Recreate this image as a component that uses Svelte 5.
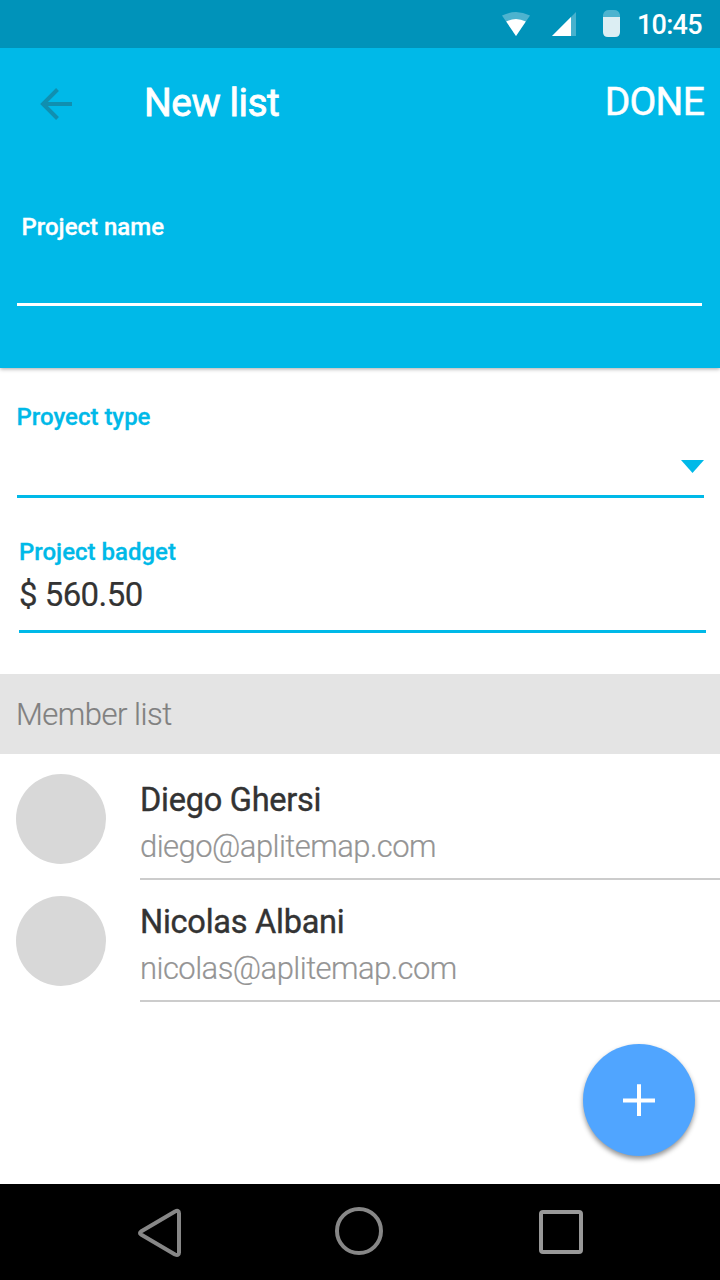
<script>
  const members = [
    { name: 'Diego Ghersi', email: 'diego@aplitemap.com' },
    { name: 'Nicolas Albani', email: 'nicolas@aplitemap.com' }
  ];
</script>

<div class="screen">
  <div class="status">
    <svg class="signals" width="120" height="48" viewBox="0 0 120 48" aria-hidden="true">
      <path d="M2 15.500Q16 8.500 30 15.500L16 36Z" fill="#fff" opacity=".3" />
      <path d="M6.200 21.500Q16 16.500 25.800 21.500L16 36Z" fill="#fff" />
      <path d="M52 36L76 12V36Z" fill="#fff" opacity=".28" />
      <path d="M52 36L71 17V36Z" fill="#fff" />
      <path d="M103 17V15Q104 10 109 10H114Q119 10 120 15V17Z" fill="#fff" opacity=".3" />
      <path d="M103 17H120V32Q120 37 115 37H108Q103 37 103 32Z" fill="#dceef3" />
    </svg>
    <span class="time">10:45</span>
  </div>

  <header>
    <div class="toolbar">
      <svg class="back" width="32" height="32" viewBox="0 0 32 32" aria-hidden="true">
        <path d="M32 16H3M17.500 1.500L3 16L17.500 30.500" fill="none" stroke="#108fb0" stroke-width="4" />
      </svg>
      <h1>New list</h1>
      <span class="done">DONE</span>
    </div>
    <div class="field name"><span class="label">Project name</span></div>
  </header>

  <div class="field type">
    <span class="label">Proyect type</span>
    <svg class="caret" width="24" height="13" viewBox="0 0 24 13" aria-hidden="true">
      <path d="M1 0H24L12.500 13Z" fill="#00b9e8" />
    </svg>
  </div>
  <div class="field budget">
    <span class="label">Project badget</span>
    <span class="value">$ 560.50</span>
  </div>

  <h2>Member list</h2>

  <main>
    {#each members as m}
      <div class="member">
        <div class="avatar"></div>
        <div class="info">
          <span class="who">{m.name}</span>
          <span class="mail">{m.email}</span>
        </div>
      </div>
    {/each}
    <div class="fab">
      <svg width="32" height="32" viewBox="0 0 32 32" aria-hidden="true">
        <path d="M0 16.500H32M16 .2V32.500" stroke="#fff" stroke-width="4" />
      </svg>
    </div>
  </main>

  <nav>
    <svg width="720" height="96" viewBox="0 0 720 96" fill="none" stroke="#878787" stroke-width="4" aria-hidden="true">
      <path d="M141 47.500Q139 49 141 50.500L175 70.500Q179 72 179 68.500V29.500Q179 25.500 175 27.500Z" stroke-linejoin="round" />
      <circle cx="359" cy="47" r="22" />
      <rect x="541" y="28" width="40" height="40" rx="2" stroke="#989898" />
    </svg>
  </nav>
</div>

<style>
  :global(body) { margin: 0; background: #fff; }
  .screen {
    width: 720px;
    height: 1280px;
    display: flex;
    flex-direction: column;
    overflow: hidden;
    background: #fff;
    font-family: Roboto, sans-serif;
    white-space: nowrap;
  }
  svg { display: block; flex: none; }
  .screen > * { box-sizing: border-box; flex: none; }
  .status {
    position: relative;
    z-index: 1;
    height: 48px;
    display: flex;
    padding-left: 500px;
    background: #0093ba;
  }
  .time {
    margin-left: 17px;
    font-size: 27px;
    font-weight: 500;
    line-height: 50px;
    letter-spacing: -.75px;
    color: #fff;
  }
  header {
    height: 320px;
    background: #00b9e8;
    color: #fff;
    box-shadow: 0 1px 4px rgba(0, 0, 0, .35);
  }
  .toolbar {
    display: flex;
    align-items: center;
    height: 110px;
    padding: 1px 16px 0 40px;
  }
  h1 {
    margin: 0 auto 0 70px;
    padding: 0 0 2px 2px;
    font-size: 39px;
    font-weight: 400;
    letter-spacing: -.5px;
    line-height: 48px;
    -webkit-text-stroke: .8px #fff;
  }
  .done {
    font-size: 39px;
    line-height: 48px;
    letter-spacing: -.8px;
    padding-bottom: 4px;
    -webkit-text-stroke: .5px #fff;
  }
  .field { display: flex; flex-direction: column; box-sizing: border-box; }
  .name {
    height: 147px;
    margin: 0 18px 0 17px;
    padding: 54px 0 0 4.500px;
    border-bottom: 3px solid #fff;
  }
  .label {
    font-size: 24px;
    font-weight: 500;
    line-height: 28px;
    -webkit-text-stroke: .3px currentColor;
  }
  .type {
    height: 130px;
    margin: 0 16px 0 16.500px;
    padding-top: 35px;
    color: #00b9e8;
    border-bottom: 3px solid #00b9e8;
  }
  .caret { margin: 29px 0 0 auto; }
  .budget {
    height: 135px;
    margin: 0 14px 0 19px;
    padding-top: 40px;
    border-bottom: 3px solid #00b9e8;
    color: #00b9e8;
  }
  .value {
    font-size: 33px;
    letter-spacing: -.55px;
    line-height: 38px;
    margin-top: 10px;
    color: #333;
    -webkit-text-stroke: .2px currentColor;
  }
  h2 {
    margin: 40px 0 0;
    height: 80px;
    padding-left: 16px;
    background: #e4e4e4;
    color: #808080;
    font-size: 31px;
    font-weight: 300;
    letter-spacing: -.5px;
    line-height: 82px;
    -webkit-text-stroke: .2px currentColor;
  }
  .budget + h2 { margin-top: 41px; }
  main { position: relative; height: 430px; padding-top: 4px; }
  .member { display: flex; height: 122px; padding-left: 16px; align-items: flex-start; }
  .avatar { width: 90px; height: 90px; margin-top: 16px; border-radius: 50%; background: #d8d8d8; flex: none; }
  .info {
    display: flex;
    flex-direction: column;
    flex: 1;
    box-sizing: border-box;
    height: 122px;
    margin-left: 34px;
    padding-top: 23px;
    border-bottom: 2px solid #ccc;
  }
  .who {
    font-size: 32.500px;
    letter-spacing: -.25px;
    line-height: 38px;
    color: #333;
    -webkit-text-stroke: .4px currentColor;
  }
  .mail {
    font-size: 31px;
    font-weight: 300;
    letter-spacing: -.55px;
    line-height: 36px;
    margin-top: 10px;
    color: #949494;
    -webkit-text-stroke: .2px currentColor;
  }
  .fab {
    position: absolute;
    left: 583px;
    top: 290px;
    width: 112px;
    height: 112px;
    border-radius: 50%;
    background: #50a5ff;
    box-shadow: 0 3px 5px rgba(0, 0, 0, .42);
    display: grid;
    place-items: center;
  }
  nav { height: 96px; background: #000; }
</style>
